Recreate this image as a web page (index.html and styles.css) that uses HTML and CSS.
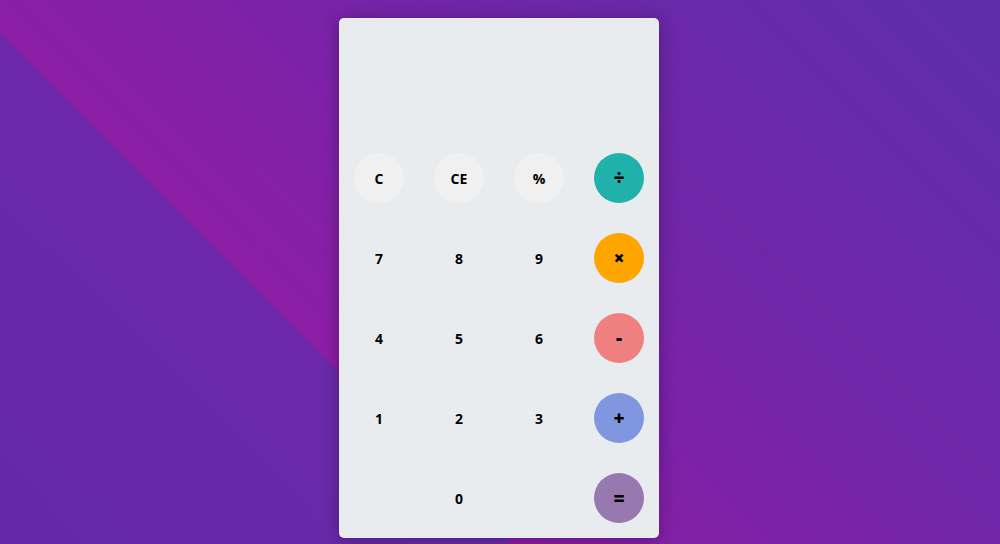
FILE: index.html
```html
<!DOCTYPE html>
<html lang="en">
<head>
<meta charset="utf-8">
<title>Calculator</title>
<link rel="stylesheet" href="styles.css">
</head>
<body>
<div class="calculator">
  <div class="display"></div>
  <div class="keys">
    <button class="key light">C</button>
    <button class="key light">CE</button>
    <button class="key light">%</button>
    <button class="key op divide">÷</button>
    <button class="key">7</button>
    <button class="key">8</button>
    <button class="key">9</button>
    <button class="key op multiply">×</button>
    <button class="key">4</button>
    <button class="key">5</button>
    <button class="key">6</button>
    <button class="key op minus">-</button>
    <button class="key">1</button>
    <button class="key">2</button>
    <button class="key">3</button>
    <button class="key op plus">+</button>
    <span class="key empty"></span>
    <button class="key">0</button>
    <span class="key empty"></span>
    <button class="key op equals">=</button>
  </div>
</div>
</body>
</html>
```
FILE: styles.css
```css
html, body {
  margin: 0;
  height: 100%;
}
body {
  background: linear-gradient(45deg, #6428a8 0px, #6b2aa9 361px, #8c1ea6 361px, #7c22a8 560px, #7026a8 720px, #682aa9 880px, #5e2eaa 100%);
  display: flex;
  justify-content: center;
  align-items: flex-start;
  padding: 18px 2px 0 0;
  box-sizing: border-box;
  font-family: "Open Sans", "DejaVu Sans", sans-serif;
  overflow: hidden;
}
.calculator {
  width: 320px;
  height: 520px;
  background: #e8ecef;
  border-radius: 5px;
  box-shadow: 0 2px 16px rgba(40, 0, 60, 0.4);
  display: flex;
  flex-direction: column;
}
.display {
  height: 120px;
}
.keys {
  display: grid;
  grid-template-columns: repeat(4, 80px);
  grid-auto-rows: 80px;
  justify-items: center;
  align-items: center;
}
.key {
  width: 50px;
  height: 50px;
  border: none;
  border-radius: 50%;
  background: transparent;
  font-family: "Open Sans", "DejaVu Sans", sans-serif;
  font-weight: 700;
  font-size: 14px;
  color: #000;
  padding: 0;
  display: flex;
  align-items: center;
  justify-content: center;
}
.light { background: #f0f0f0; }
.op { font-size: 19px; font-weight: 800; }
.divide { background: #20b2aa; }
.multiply { background: #ffa500; }
.minus { background: #f08080; }
.plus { background: #8097e0; }
.equals { background: #9779b0; }
```
